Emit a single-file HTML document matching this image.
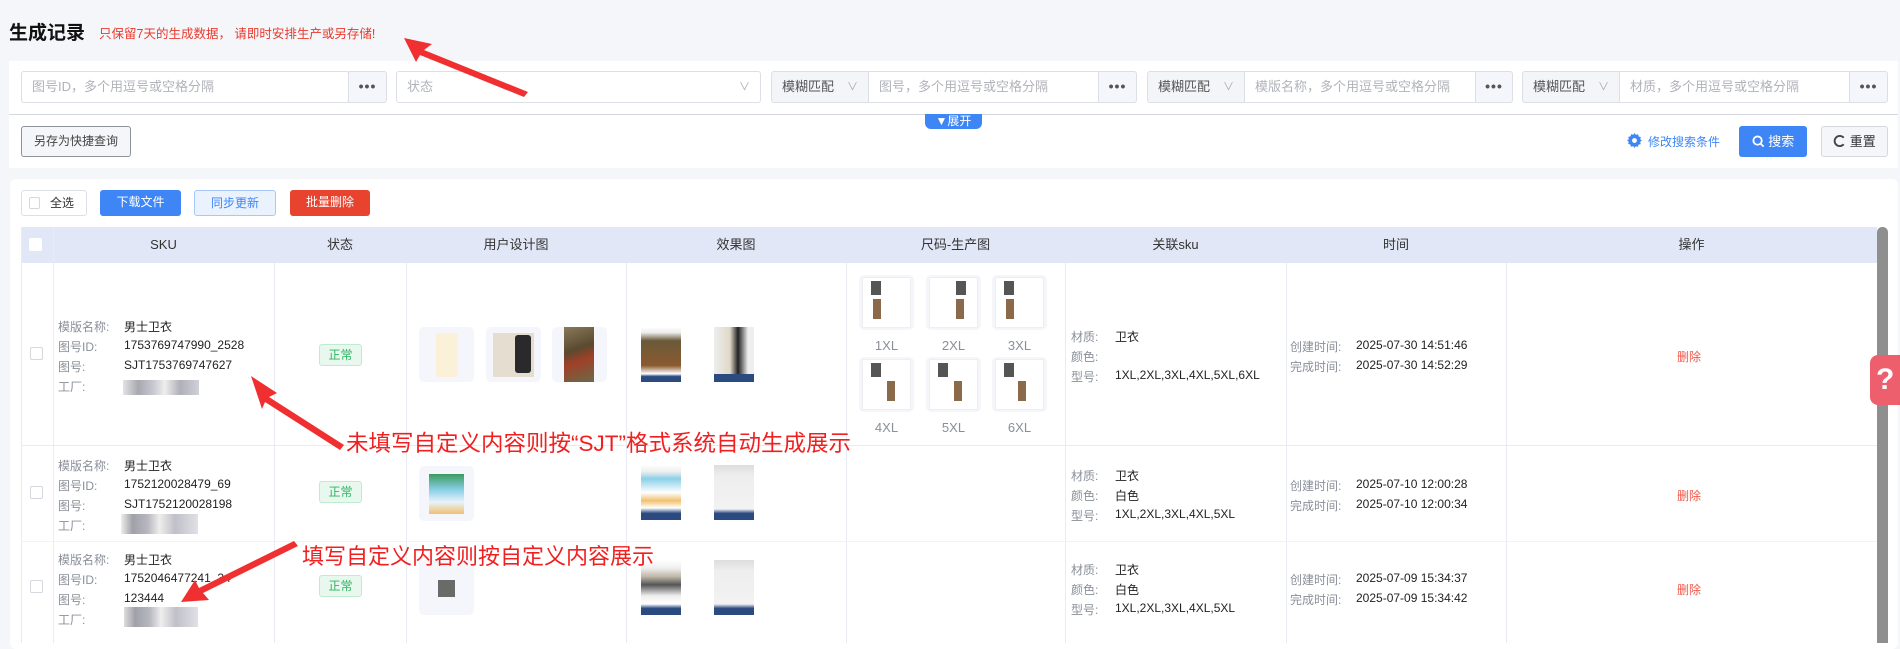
<!DOCTYPE html>
<html><head><meta charset="utf-8"><style>
*{box-sizing:border-box;margin:0;padding:0}
body{width:1900px;height:643px;overflow:hidden;background:#f5f6fa;font-family:"Liberation Sans","Noto Sans CJK SC",sans-serif;position:relative;color:#333;font-size:13px}
.a{position:absolute}
.card{background:#fff}
.inp{position:absolute;top:71px;height:32px;border:1px solid #dcdfe6;border-radius:3px;background:#fff;color:#b0b3b9;font-size:13px;line-height:30px;padding-left:10px;white-space:nowrap;overflow:hidden}
.dots{position:absolute;top:71px;height:32px;border:1px solid #dcdfe6;border-radius:0 3px 3px 0;background:#f4f6fb;color:#555;text-align:center;line-height:28px;font-weight:bold;font-size:14px;letter-spacing:1px}
.pre{position:absolute;top:71px;height:32px;border:1px solid #dcdfe6;border-radius:3px 0 0 3px;background:#f4f5f8;color:#555;line-height:30px;padding-left:10px;font-size:13px}
.pre span{position:absolute;right:10px;color:#aaa;font-size:11px}
.btn{position:absolute;height:26px;line-height:24px;text-align:center;border-radius:3px;font-size:12px}
.th{position:absolute;top:227px;height:36px;line-height:36px;text-align:center;font-size:13px;color:#333}
.vl{position:absolute;width:1px;background:#e8ebf2}
.hl{position:absolute;height:1px;background:#e8ebf2;left:21px;width:1856px}
.lb{position:absolute;color:#8a8f99;font-size:12px;white-space:nowrap}
.vv{position:absolute;color:#222;font-size:12px;white-space:nowrap}
.tag{position:absolute;left:319px;width:43px;height:22px;border:1px solid #bfeccf;background:#e8f8ee;color:#2fb462;border-radius:3px;text-align:center;line-height:20px;font-size:12px}
.cb{position:absolute;left:30px;width:13px;height:13px;border:1px solid #d4d7de;border-radius:2px;background:#fff}
.th1{position:absolute;width:55px;height:55px;border-radius:5px;background:#f4f6fb}
.sz{position:absolute;width:55px;height:55px;border-radius:5px;background:#f5f6fa}
.sz i{position:absolute;left:3px;top:2px;width:49px;height:51px;background:#fff;border:1px solid #eceef2}
.sz b{position:absolute;left:12px;top:6px;width:10px;height:14px;background:#555}
.sz u{position:absolute;left:14px;top:24px;width:8px;height:20px;background:#8a6a4a}
.szl{position:absolute;width:55px;text-align:center;color:#8a8f99;font-size:13px}
.del{position:absolute;left:1677px;color:#f0584a;font-size:12px}
.red{position:absolute;color:#f02020;font-size:22px;white-space:nowrap}
.hood{position:absolute;width:40px;height:55px}
</style></head><body>
<div class="a" style="left:9px;top:18px;font-size:19px;font-weight:bold;color:#111">生成记录</div>
<div class="a" style="left:99px;top:23px;font-size:12.5px;color:#e8392c">只保留7天的生成数据， 请即时安排生产或另存储!</div>

<div class="a card" style="left:9px;top:61px;width:1889px;height:107px"></div>
<div class="inp" style="left:21px;width:328px">图号ID，多个用逗号或空格分隔</div>
<div class="dots" style="left:348px;width:39px">•••</div>
<div class="inp" style="left:396px;width:365px">状态<span style="position:absolute;right:10px;color:#aaa;font-size:11px">∨</span></div>
<div class="pre" style="left:771px;width:98px">模糊匹配<span>∨</span></div>
<div class="inp" style="left:868px;width:231px;border-radius:0">图号，多个用逗号或空格分隔</div>
<div class="dots" style="left:1098px;width:39px">•••</div>
<div class="pre" style="left:1147px;width:98px">模糊匹配<span>∨</span></div>
<div class="inp" style="left:1244px;width:232px;border-radius:0">模版名称，多个用逗号或空格分隔</div>
<div class="dots" style="left:1475px;width:38px">•••</div>
<div class="pre" style="left:1522px;width:98px">模糊匹配<span>∨</span></div>
<div class="inp" style="left:1619px;width:231px;border-radius:0">材质，多个用逗号或空格分隔</div>
<div class="dots" style="left:1849px;width:39px">•••</div>
<div class="a" style="left:9px;top:114px;width:1889px;height:1px;background:#d6d8e0"></div>
<div class="a" style="left:925px;top:114px;width:57px;height:15px;background:#3e86f5;border-radius:0 0 6px 6px;color:#fff;font-size:12px;line-height:14px;text-align:center">▼展开</div>
<div class="btn" style="left:21px;top:126px;width:110px;height:31px;line-height:29px;border:1px solid #8e929a;background:#f5f6fa;color:#444;font-size:12px">另存为快捷查询</div>
<svg class="a" style="left:1627px;top:133px" width="15" height="15" viewBox="0 0 16 16"><path fill="#3e86f5" d="M8 0l1.5 2 2.4-.7.5 2.4 2.4.7-.7 2.4L16 8l-2 1.5.7 2.4-2.4.5-.7 2.4-2.4-.7L8 16l-1.5-2-2.4.7-.5-2.4-2.4-.7.7-2.4L0 8l2-1.5-.7-2.4 2.4-.5.7-2.4 2.4.7z"/><circle cx="8" cy="8" r="2.6" fill="#fff"/></svg>
<div class="a" style="left:1648px;top:133px;color:#3e86f5;font-size:12px">修改搜索条件</div>
<div class="btn" style="left:1739px;top:126px;width:68px;height:31px;line-height:31px;background:#3e86f5;color:#fff;font-size:13px"><svg width="13" height="13" viewBox="0 0 14 14" style="vertical-align:-2px"><circle cx="6" cy="6" r="4.5" fill="none" stroke="#fff" stroke-width="2"/><path d="M9 9l3.5 3.5" stroke="#fff" stroke-width="2"/></svg> 搜索</div>
<div class="btn" style="left:1821px;top:126px;width:67px;height:31px;line-height:29px;border:1px solid #d6d8e0;background:#f5f6fa;color:#333;font-size:13px"><svg width="13" height="14" viewBox="0 0 14 14" style="vertical-align:-2px"><path d="M11.5 3.5A5.5 5.5 0 1 0 11.5 10.5" fill="none" stroke="#444" stroke-width="2"/></svg> 重置</div>

<div class="a card" style="left:10px;top:179px;width:1888px;height:470px;border-radius:6px"></div>
<div class="btn" style="left:21px;top:190px;width:66px;border:1px solid #dcdfe6;background:#fff;color:#333;text-align:left;padding-left:28px">全选</div>
<div class="a" style="left:29px;top:197px;width:11px;height:12px;border:1px solid #d4d7de;border-radius:2px"></div>
<div class="btn" style="left:100px;top:190px;width:81px;background:#3e86f5;color:#fff">下载文件</div>
<div class="btn" style="left:194px;top:190px;width:82px;background:#eaf2fe;border:1px solid #a8c8fa;color:#3e86f5">同步更新</div>
<div class="btn" style="left:290px;top:190px;width:80px;background:#e8432e;color:#fff">批量删除</div>

<div class="a" style="left:21px;top:227px;width:1856px;height:36px;background:#e1e7f6"></div>
<div class="a" style="left:29px;top:238px;width:13px;height:13px;background:#fff;border-radius:2px"></div>
<div class="th" style="left:53px;width:221px">SKU</div>
<div class="th" style="left:274px;width:132px">状态</div>
<div class="th" style="left:406px;width:220px">用户设计图</div>
<div class="th" style="left:626px;width:220px">效果图</div>
<div class="th" style="left:846px;width:219px">尺码-生产图</div>
<div class="th" style="left:1065px;width:221px">关联sku</div>
<div class="th" style="left:1286px;width:220px">时间</div>
<div class="th" style="left:1506px;width:371px">操作</div>
<div class="a" style="left:1877px;top:227px;width:11px;height:416px;background:#8f8f8f;border-radius:5px 5px 0 0"></div>
<div class="a" style="left:21px;top:227px;width:1px;height:416px;background:#e8ebf2"></div>
<div class="vl" style="left:53px;top:227px;height:416px;background:#e9ecf3"></div>
<div class="vl" style="left:274px;top:263px;height:380px"></div>
<div class="vl" style="left:406px;top:263px;height:380px"></div>
<div class="vl" style="left:626px;top:263px;height:380px"></div>
<div class="vl" style="left:846px;top:263px;height:380px"></div>
<div class="vl" style="left:1065px;top:263px;height:380px"></div>
<div class="vl" style="left:1286px;top:263px;height:380px"></div>
<div class="vl" style="left:1506px;top:263px;height:380px"></div>
<div class="hl" style="top:445px"></div>
<div class="hl" style="top:541px;background:#f2f3f7"></div>

<!-- row1 -->
<div class="cb" style="top:347px"></div>
<div class="lb" style="left:58px;top:318px">模版名称:</div><div class="vv" style="left:124px;top:318px">男士卫衣</div>
<div class="lb" style="left:58px;top:338px">图号ID:</div><div class="vv" style="left:124px;top:338px">1753769747990_2528</div>
<div class="lb" style="left:58px;top:358px">图号:</div><div class="vv" style="left:124px;top:358px">SJT1753769747627</div>
<div class="lb" style="left:58px;top:378px">工厂:</div>
<div class="a" style="left:123px;top:380px;width:76px;height:15px;background:linear-gradient(90deg,#e2e2e6,#a8a8b0 20%,#c8c8d0 40%,#eee 55%,#b0b0b8 75%,#d0d0d8)"></div>
<div class="tag" style="top:344px">正常</div>
<div class="th1" style="left:419px;top:327px"><div class="a" style="left:17px;top:6px;width:22px;height:44px;background:#fbf0d8;border-radius:3px"></div></div>
<div class="th1" style="left:486px;top:327px"><div class="a" style="left:7px;top:6px;width:41px;height:44px;background:#e4ddd0"></div><div class="a" style="left:29px;top:8px;width:16px;height:38px;background:#2a2a2c;border-radius:3px"></div></div>
<div class="th1" style="left:552px;top:327px"><div class="a" style="left:12px;top:0;width:30px;height:55px;background:linear-gradient(160deg,#8a7a5a,#5a4a30 40%,#a04028 60%,#6a6a4a)"></div></div>
<div class="hood" style="left:641px;top:327px;background:linear-gradient(#fff 0,#eee 10%,#6a5a3a 25%,#8a5a30 70%,#fff 85%,#2a4a80 90%)"></div>
<div class="hood" style="left:714px;top:327px;background:linear-gradient(90deg,#eee 0,#e0d8c8 40%,#222 60%,#eee 85%);border-bottom:8px solid #2a4a80"></div>
<div class="sz" style="left:859px;top:275px"><i></i><b></b><u></u></div>
<div class="sz" style="left:926px;top:275px"><i></i><b style="left:30px"></b><u style="left:30px"></u></div>
<div class="sz" style="left:992px;top:275px"><i></i><b></b><u></u></div>
<div class="szl" style="left:859px;top:338px">1XL</div><div class="szl" style="left:926px;top:338px">2XL</div><div class="szl" style="left:992px;top:338px">3XL</div>
<div class="sz" style="left:859px;top:357px"><i></i><b></b><u style="left:28px"></u></div>
<div class="sz" style="left:926px;top:357px"><i></i><b></b><u style="left:28px"></u></div>
<div class="sz" style="left:992px;top:357px"><i></i><b></b><u style="left:26px"></u></div>
<div class="szl" style="left:859px;top:420px">4XL</div><div class="szl" style="left:926px;top:420px">5XL</div><div class="szl" style="left:992px;top:420px">6XL</div>
<div class="lb" style="left:1071px;top:328px">材质:</div><div class="vv" style="left:1115px;top:328px">卫衣</div>
<div class="lb" style="left:1071px;top:348px">颜色:</div>
<div class="lb" style="left:1071px;top:368px">型号:</div><div class="vv" style="left:1115px;top:368px">1XL,2XL,3XL,4XL,5XL,6XL</div>
<div class="lb" style="left:1290px;top:338px">创建时间:</div><div class="vv" style="left:1356px;top:338px">2025-07-30 14:51:46</div>
<div class="lb" style="left:1290px;top:358px">完成时间:</div><div class="vv" style="left:1356px;top:358px">2025-07-30 14:52:29</div>
<div class="del" style="top:348px">删除</div>

<!-- row2 -->
<div class="cb" style="top:486px"></div>
<div class="lb" style="left:58px;top:457px">模版名称:</div><div class="vv" style="left:124px;top:457px">男士卫衣</div>
<div class="lb" style="left:58px;top:477px">图号ID:</div><div class="vv" style="left:124px;top:477px">1752120028479_69</div>
<div class="lb" style="left:58px;top:497px">图号:</div><div class="vv" style="left:124px;top:497px">SJT1752120028198</div>
<div class="lb" style="left:58px;top:517px">工厂:</div>
<div class="a" style="left:121px;top:514px;width:77px;height:20px;background:linear-gradient(90deg,#eee,#a0a0a8 15%,#b8b8c0 35%,#eee 50%,#c0c0c8 70%,#e0e0e6)"></div>
<div class="tag" style="top:481px">正常</div>
<div class="th1" style="left:419px;top:466px"><div class="a" style="left:10px;top:8px;width:35px;height:40px;background:linear-gradient(#3a9a60,#8ad0e8 40%,#e8f4fa 70%,#f0c070)"></div></div>
<div class="hood" style="left:641px;top:465px;background:linear-gradient(#fff 0,#eee 12%,#8ad0e8 25%,#fff 50%,#f0c070 65%,#fff 78%,#2a4a80 88%)"></div>
<div class="hood" style="left:714px;top:465px;background:linear-gradient(#ddd,#eee 20%,#f2f2f2 80%,#2a4a80 88%)"></div>
<div class="lb" style="left:1071px;top:467px">材质:</div><div class="vv" style="left:1115px;top:467px">卫衣</div>
<div class="lb" style="left:1071px;top:487px">颜色:</div><div class="vv" style="left:1115px;top:487px">白色</div>
<div class="lb" style="left:1071px;top:507px">型号:</div><div class="vv" style="left:1115px;top:507px">1XL,2XL,3XL,4XL,5XL</div>
<div class="lb" style="left:1290px;top:477px">创建时间:</div><div class="vv" style="left:1356px;top:477px">2025-07-10 12:00:28</div>
<div class="lb" style="left:1290px;top:497px">完成时间:</div><div class="vv" style="left:1356px;top:497px">2025-07-10 12:00:34</div>
<div class="del" style="top:487px">删除</div>

<!-- row3 -->
<div class="cb" style="top:580px"></div>
<div class="lb" style="left:58px;top:551px">模版名称:</div><div class="vv" style="left:124px;top:551px">男士卫衣</div>
<div class="lb" style="left:58px;top:571px">图号ID:</div><div class="vv" style="left:124px;top:571px">1752046477241_34</div>
<div class="lb" style="left:58px;top:591px">图号:</div><div class="vv" style="left:124px;top:591px">123444</div>
<div class="lb" style="left:58px;top:611px">工厂:</div>
<div class="a" style="left:124px;top:607px;width:74px;height:20px;background:linear-gradient(90deg,#ddd,#a0a0a8 15%,#b8b8c0 35%,#eee 50%,#c0c0c8 70%,#e0e0e6)"></div>
<div class="tag" style="top:575px">正常</div>
<div class="th1" style="left:419px;top:560px"><div class="a" style="left:19px;top:20px;width:17px;height:17px;background:#6a6a68"></div></div>
<div class="hood" style="left:641px;top:560px;background:linear-gradient(#fff 0,#eee 15%,#c0b8a8 30%,#555 45%,#eee 65%,#fff 80%,#2a4a80 88%)"></div>
<div class="hood" style="left:714px;top:560px;background:linear-gradient(#ddd,#eee 20%,#f2f2f2 80%,#2a4a80 88%)"></div>
<div class="lb" style="left:1071px;top:561px">材质:</div><div class="vv" style="left:1115px;top:561px">卫衣</div>
<div class="lb" style="left:1071px;top:581px">颜色:</div><div class="vv" style="left:1115px;top:581px">白色</div>
<div class="lb" style="left:1071px;top:601px">型号:</div><div class="vv" style="left:1115px;top:601px">1XL,2XL,3XL,4XL,5XL</div>
<div class="lb" style="left:1290px;top:571px">创建时间:</div><div class="vv" style="left:1356px;top:571px">2025-07-09 15:34:37</div>
<div class="lb" style="left:1290px;top:591px">完成时间:</div><div class="vv" style="left:1356px;top:591px">2025-07-09 15:34:42</div>
<div class="del" style="top:581px">删除</div>

<div class="a" style="left:1870px;top:355px;width:35px;height:50px;background:#ee5f6e;border-radius:8px 0 0 8px;color:#fff;font-weight:bold;font-size:30px;line-height:50px;padding-left:6px">?</div>

<div class="red" style="left:346px;top:426px;font-size:22.5px">未填写自定义内容则按“SJT”格式系统自动生成展示</div>
<div class="red" style="left:302px;top:539px">填写自定义内容则按自定义内容展示</div>
<svg class="a" style="left:0;top:0" width="1900" height="643">
<g fill="#f03030">
<polygon points="404,38 432,44 424,50 528,92 524,97 420,55 416,62"/>
<polygon points="251,376 277,393 269,397 344,445 340,450 265,402 262,409"/>
<polygon points="181,602 195,580 199,588 294,541 298,546 203,593 209,600"/>
</g>
</svg>
</body></html>
